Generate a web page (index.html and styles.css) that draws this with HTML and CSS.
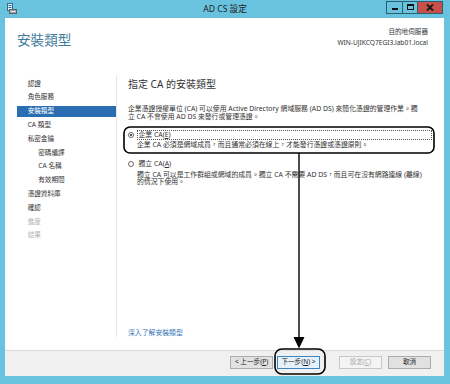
FILE: index.html
```html
<!DOCTYPE html>
<html lang="zh-Hant">
<head>
<meta charset="utf-8">
<title>AD CS 設定</title>
<link rel="stylesheet" href="styles.css">
</head>
<body>
<div class="window">
  <div class="titlebar">
    <div class="tb-left">
      <svg class="app-icon" width="10" height="11" viewBox="0 0 10 11">
        <rect x="0.5" y="0.5" width="5" height="7" fill="#e8f2f8" stroke="#2f6b9a"/>
        <rect x="1.5" y="2" width="3" height="1" fill="#2f6b9a"/>
        <rect x="1.5" y="4" width="3" height="1" fill="#2f6b9a"/>
        <rect x="2.5" y="6.5" width="7" height="4" fill="#9aa3aa" stroke="#59626a"/>
        <rect x="3.5" y="8" width="5" height="1" fill="#dfe4e8"/>
      </svg>
    </div>
    <div class="tb-title">AD CS 設定</div>
    <div class="tb-controls">
      <span class="cap cap-min"><svg width="14" height="11" viewBox="0 0 14 11"><rect x="4" y="6" width="6" height="2" fill="#111"/></svg></span>
      <span class="cap cap-max"><svg width="13" height="11" viewBox="0 0 13 11"><rect x="3.5" y="2.5" width="6" height="5" fill="none" stroke="#111"/><rect x="3" y="2" width="7" height="2" fill="#111"/></svg></span>
      <span class="cap cap-close"><svg width="24" height="11" viewBox="0 0 24 11"><path d="M9 2.5 L15 8.5 M15 2.5 L9 8.5" stroke="#1a1a1a" stroke-width="1.8"/></svg></span>
    </div>
  </div>

  <div class="client">
    <header class="head">
      <h1 class="page-title">安裝類型</h1>
      <div class="dest">
        <div class="dest-label">目的地伺服器</div>
        <div class="dest-name">WIN-UJIKCQ7EGI3.lab01.local</div>
      </div>
    </header>

    <div class="main">
      <nav class="nav">
        <div class="nav-item">認證</div>
        <div class="nav-item">角色服務</div>
        <div class="nav-item active">安裝類型</div>
        <div class="nav-item">CA 類型</div>
        <div class="nav-item">私密金鑰</div>
        <div class="nav-item sub">密碼編譯</div>
        <div class="nav-item sub">CA 名稱</div>
        <div class="nav-item sub">有效期間</div>
        <div class="nav-item">憑證資料庫</div>
        <div class="nav-item">確認</div>
        <div class="nav-item disabled">進度</div>
        <div class="nav-item disabled">結果</div>
      </nav>

      <section class="content">
        <h2 class="section-title">指定 CA 的安裝類型</h2>
        <p class="intro">企業憑證授權單位 (CA) 可以使用 Active Directory 網域服務 (AD DS) 來簡化憑證的管理作業。獨立 CA 不會使用 AD DS 來發行或管理憑證。</p>

        <div class="option">
          <div class="opt-label">
            <span class="radio checked"></span>
            <span class="label-text focused">企業 CA(<u>E</u>)</span>
          </div>
          <p class="opt-desc">企業 CA 必須是網域成員，而且通常必須在線上，才能發行憑證或憑證原則。</p>
        </div>

        <div class="option second">
          <div class="opt-label">
            <span class="radio"></span>
            <span class="label-text">獨立 CA(<u>A</u>)</span>
          </div>
          <p class="opt-desc">獨立 CA 可以是工作群組或網域的成員。獨立 CA 不需要 AD DS，而且可在沒有網路連線 (離線) 的情況下使用。</p>
        </div>

        <a class="more">深入了解安裝類型</a>
      </section>
    </div>

    <footer class="foot">
      <button class="btn">&lt; 上一步(<u>P</u>)</button>
      <button class="btn default">下一步(<u>N</u>) &gt;</button>
      <button class="btn disabled">設定(<u>C</u>)</button>
      <button class="btn">取消</button>
    </footer>
  </div>

  <svg class="annot" width="450" height="384" viewBox="0 0 450 384">
    <rect x="124" y="127" width="310" height="26" rx="6" fill="none" stroke="#000" stroke-width="1.6"/>
    <line x1="299" y1="153" x2="299" y2="339" stroke="#000" stroke-width="1.4"/>
    <polygon points="293.5,337 304.5,337 299,348.5" fill="#000"/>
    <rect x="275" y="349" width="50" height="25" rx="7" fill="none" stroke="#000" stroke-width="1.6"/>
  </svg>
</div>
</body>
</html>
```

FILE: styles.css
```css
* { box-sizing: border-box; }

html, body {
  margin: 0;
  padding: 0;
}

body {
  font-family: "Noto Sans", "Noto Sans CJK TC", sans-serif;
  color: #333;
  background: #6ac3de;
}

.window {
  position: relative;
  width: 450px;
  height: 384px;
  background: #6ac3de;
  display: flex;
  flex-direction: column;
}

/* title bar */
.titlebar {
  height: 18px;
  display: grid;
  grid-template-columns: 1fr auto 1fr;
  align-items: start;
}

.tb-left {
  padding: 3px 0 0 7px;
}

.app-icon { display: block; }

.tb-title {
  font-size: 8.6px;
  line-height: 18px;
  color: #222;
}

.tb-controls {
  justify-self: end;
  display: flex;
  padding: 1px 7px 0 0;
}

.cap {
  height: 13px;
  display: flex;
  align-items: center;
  justify-content: center;
  border: 1px solid #2e5d6e;
}

.cap-min { width: 16px; border-right: none; }
.cap-max { width: 15px; border-right: none; }
.cap-close { width: 26px; background: #c7504b; }

/* client */
.client {
  flex: 1;
  margin: 0 6px 8px 5px;
  background: #fff;
  display: flex;
  flex-direction: column;
}

.head {
  height: 57px;
  display: flex;
  justify-content: space-between;
  align-items: flex-start;
  padding: 0 16px 0 12px;
}

.page-title {
  margin: 14px 0 0;
  font-size: 13.6px;
  line-height: 16px;
  font-weight: normal;
  color: #3f7c9c;
}

.dest {
  margin-top: 9px;
  text-align: right;
  font-size: 6.6px;
  line-height: 10.5px;
  color: #333;
}

.main {
  flex: 1;
  display: flex;
  padding-bottom: 13px;
}

.nav {
  width: 112px;
  border-right: 1px solid #e6e6e6;
  padding: 3.7px 0 0 11.7px;
}

.nav-item {
  height: 10.8px;
  line-height: 10.8px;
  margin-bottom: 3px;
  padding-left: 11px;
  font-size: 6.6px;
  color: #333;
  white-space: nowrap;
}

.nav-item.sub { padding-left: 21.6px; }

.nav-item.active {
  background: #2a6db0;
  color: #fff;
}

.nav-item.disabled { color: #b4b4b4; }

.content {
  flex: 1;
  padding: 3px 12px 0 11px;
  display: flex;
  flex-direction: column;
  font-size: 6.85px;
}

.section-title {
  margin: 0;
  font-size: 10px;
  line-height: 12px;
  font-weight: normal;
  color: #333;
}

.intro {
  margin: 15.2px 0 0;
  line-height: 7.5px;
  padding-right: 10px;
}

.option { margin-top: 10.2px; }
.option.second { margin-top: 10.8px; }

.opt-label {
  display: flex;
  align-items: center;
  height: 9px;
}

.radio {
  width: 6px;
  height: 6px;
  border: 1px solid #6a6a6a;
  border-radius: 50%;
  margin-right: 2.5px;
  flex: none;
  background: #fff;
  position: relative;
}

.radio.checked::after {
  content: "";
  position: absolute;
  left: 1px;
  top: 1px;
  width: 2px;
  height: 2px;
  border-radius: 50%;
  background: #222;
}

.label-text {
  flex: 1;
  line-height: 7.5px;
  padding-left: 1px;
  border: 1px dotted transparent;
}

.label-text.focused { border-color: #555; }

.opt-desc {
  margin: 2px 0 0;
  padding: 0 5px 0 9px;
  line-height: 7.5px;
}

.more {
  margin-top: auto;
  line-height: 8px;
  color: #3a78b8;
}

/* footer */
.foot {
  height: 26px;
  border-top: 1px solid #dcdcdc;
  background: #f0f0f0;
  display: flex;
  justify-content: flex-end;
  align-items: flex-start;
  padding: 5px 13px 0 0;
}

.btn {
  width: 43px;
  height: 12.5px;
  padding: 0;
  border: 1px solid #acacac;
  background: #e1e1e1;
  font-family: inherit;
  font-size: 6.6px;
  line-height: 10px;
  color: #222;
}

.btn + .btn { margin-left: 4px; }
.btn.disabled { margin-left: 19px; color: #a8a8a8; border-color: #c8c8c8; background: #f4f4f4; }
.btn.disabled + .btn { margin-left: 6px; }
.btn.default { border-color: #3c86c4; background: #e5f1fb; }

.annot {
  position: absolute;
  left: 0;
  top: 0;
  pointer-events: none;
}
```
